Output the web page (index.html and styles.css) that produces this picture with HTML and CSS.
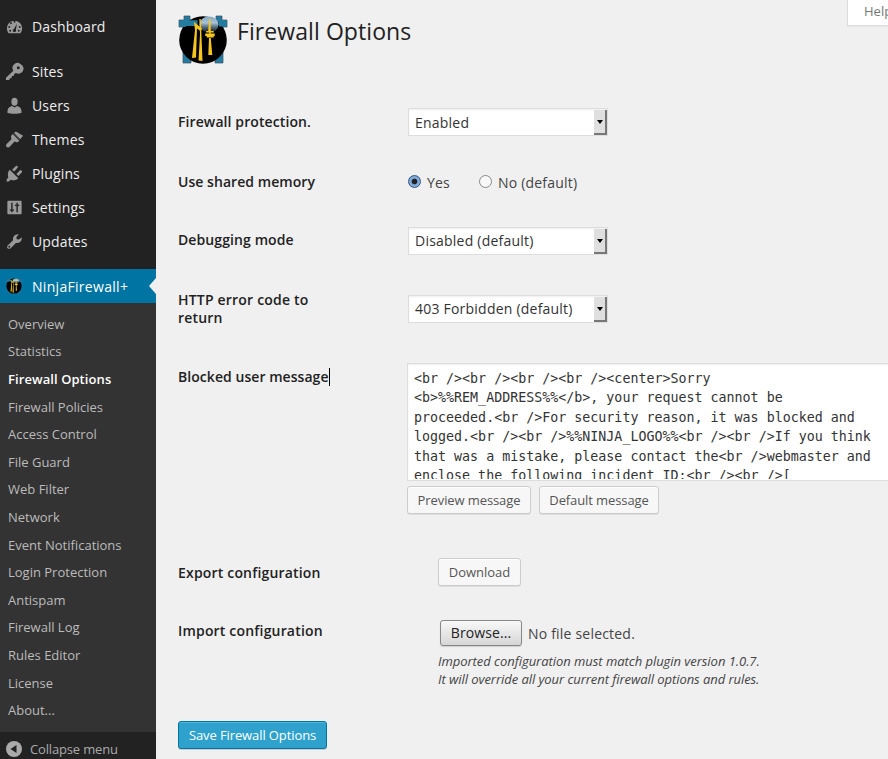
FILE: index.html
```
<!DOCTYPE html>
<html lang="en">
<head>
<meta charset="utf-8">
<title>Firewall Options</title>
<link rel="stylesheet" href="styles.css">
</head>
<body>
<svg class="defs" width="0" height="0">
  <defs>
    <linearGradient id="shine" x1="0" y1="0" x2="0" y2="1">
      <stop offset="0" stop-color="#7fa8c4"/><stop offset=".4" stop-color="#a9c3d8"/><stop offset="1" stop-color="#4f7797" stop-opacity=".25"/>
    </linearGradient>
    <symbol id="ninja" viewBox="0 0 50 50">
      <path fill="#247ba0" stroke="#3b5260" stroke-width=".7" d="M6 1h6v4h26V1h6v4h5v7h-4v36h-8V12H13v36H5V12H1V5h5z"/>
      <circle cx="25" cy="25" r="23.8" fill="#000"/>
      <path fill="#247ba0" d="M1.500 5.300h18v5.700H9l-2 1H1.500zM40 5.300h8.500v6.200H41z"/>
      <ellipse cx="31" cy="9.500" rx="9.500" ry="8" fill="url(#shine)"/>
      <path fill="#f5c51f" d="M16 7l8 6.500-1 3-4-3-1 29-4 .5 3-28zM21.300 4h1.500l1.700 42-4-.5 1.500-26zM31.200 4h1.500v12h3v1.500h-3v1h4v2.500h-1v1.500h-7V21h-1.500v-2.500h4v-1h-3V16h2zM31 23h1.800l1.500 17h-4z"/>
    </symbol>
  </defs>
</svg>
<div class="app">
  <nav class="sidebar">
    <ul class="menu">
      <li class="item first"><svg class="icon" viewBox="0 0 20 20"><path fill-rule="evenodd" d="M3.800 17A8 8 0 1 1 16.200 17zM10 4a1 1 0 1 0 0 2 1 1 0 0 0 0-2zM6.300 5.500a1 1 0 1 0 0 2 1 1 0 0 0 0-2zM4.500 9.500a1 1 0 1 0 0 2 1 1 0 0 0 0-2zM15.500 9.500a1 1 0 1 0 0 2 1 1 0 0 0 0-2zM12.500 7l-3 5.500a1.700 1.700 0 1 0 2 1zM5.500 13.500a1 1 0 1 0 0 2 1 1 0 0 0 0-2zM14.500 13.500a1 1 0 1 0 0 2 1 1 0 0 0 0-2z"/></svg><span>Dashboard</span></li>
      <li class="item"><svg class="icon" viewBox="0 0 20 20"><path fill-rule="evenodd" d="M17 2.500a5.300 5.300 0 0 0-8.200 6.600L1 16.500V19h3.500l.5-2h1.800l.5-2.200h1.800l.5-1.800 1.700-1.500A5.300 5.300 0 0 0 17 2.500zM15.500 6.500a1.500 1.500 0 1 1-2.900-.8 1.500 1.500 0 0 1 2.900.8z"/></svg><span>Sites</span></li>
      <li class="item"><svg class="icon" viewBox="0 0 20 20"><ellipse cx="10" cy="6" rx="3.300" ry="4.200"/><path d="M2.500 17.500c0-4 1.500-6.500 5-7l2.500 1.500 2.500-1.500c3.500.5 5 3 5 7-4 1.500-11 1.500-15 0z"/></svg><span>Users</span></li>
      <li class="item"><svg class="icon" viewBox="0 0 20 20"><path d="M11.500 1.500l7.500 4.500-3.500 4.200-6.500-6.700zM8.200 4.300l6.800 7-1.500 1.500c-1.500 0-2.500-.3-3.500-.8L5 17.500c-2 2-5 0-3.500-2.500L7 9.500c-.8-1.200-.8-2.500-.5-3.500z"/><path d="M9.200 3.200l7 7.200" stroke="#222" stroke-width=".9"/></svg><span>Themes</span></li>
      <li class="item"><svg class="icon" viewBox="0 0 20 20"><path d="M5 6l9 9c-2.500 2.500-5.500 2.700-8 1.500L4 18.500l-2.500-.2.300-2L3.500 14C2.500 11 3 8 5 6zM7.500 6l4-4c1.500-.5 2.500 1 1.800 2L9.700 8zM12 10.500l3.800-3.800c1.500-.8 2.800.6 2 2l-3.700 4z"/></svg><span>Plugins</span></li>
      <li class="item"><svg class="icon" viewBox="0 0 20 20"><path fill-rule="evenodd" d="M3.500 3h13a1 1 0 0 1 1 1v12a1 1 0 0 1-1 1h-13a1 1 0 0 1-1-1V4a1 1 0 0 1 1-1zM6.500 5v7H5v1.500h1.500V15H8v-1.500h1.500V12H8V5zM12 5v2h-1.500v1.500H12V15h1.500V8.500H15V7h-1.500V5z"/></svg><span>Settings</span></li>
      <li class="item"><svg class="icon" viewBox="0 0 20 20"><path fill-rule="evenodd" d="M17.500 5.500a5 5 0 0 1-6 6L6 17c-2.300 2-5-.3-3.200-2.800L8.500 8.800a5 5 0 0 1 6-6.300L12 5.300l.3 2.400 2.400.3zM4.500 14.500a1 1 0 1 0 0 2 1 1 0 0 0 0-2z"/></svg><span>Updates</span></li>
      <li class="item current"><svg class="mini"><use href="#ninja"/></svg><span>NinjaFirewall+</span></li>
    </ul>
    <ul class="submenu">
      <li>Overview</li><li>Statistics</li><li class="on">Firewall Options</li><li>Firewall Policies</li><li>Access Control</li><li>File Guard</li><li>Web Filter</li><li>Network</li><li>Event Notifications</li><li>Login Protection</li><li>Antispam</li><li>Firewall Log</li><li>Rules Editor</li><li>License</li><li>About...</li>
    </ul>
    <div class="collapse"><svg class="cicon" viewBox="0 0 16 16"><circle cx="8" cy="8" r="8" fill="#aaa"/><path d="M10.500 4v8L4.500 8z" fill="#222"/></svg><span>Collapse menu</span></div>
  </nav>
  <main class="content">
    <div class="help">Help</div>
    <header class="head"><svg class="logo"><use href="#ninja"/></svg><h1>Firewall Options</h1></header>
    <form class="form">
      <div class="row r1"><b>Firewall protection.</b><div class="select"><span>Enabled</span><i></i></div></div>
      <div class="row r2"><b>Use shared memory</b><div class="radios"><span class="radio checked"></span><span class="yes">Yes</span><span class="radio"></span><span>No (default)</span></div></div>
      <div class="row r3"><b>Debugging mode</b><div class="select"><span>Disabled (default)</span><i></i></div></div>
      <div class="row r4"><b>HTTP error code to return</b><div class="select"><span>403 Forbidden (default)</span><i></i></div></div>
      <div class="row r5"><b><span class="caret">Blocked user message</span></b><div>
        <div class="area"><div class="text">&lt;br /&gt;&lt;br /&gt;&lt;br /&gt;&lt;br /&gt;&lt;center&gt;Sorry
&lt;b&gt;%%REM_ADDRESS%%&lt;/b&gt;, your request cannot be
proceeded.&lt;br /&gt;For security reason, it was blocked and
logged.&lt;br /&gt;&lt;br /&gt;%%NINJA_LOGO%%&lt;br /&gt;&lt;br /&gt;If you think
that was a mistake, please contact the&lt;br /&gt;webmaster and
enclose the following incident ID:&lt;br /&gt;&lt;br /&gt;[</div></div>
        <div class="buttons"><span class="btn preview">Preview message</span><span class="btn default">Default message</span></div></div></div>
      <div class="row r6"><b>Export configuration</b><span class="btn download">Download</span></div>
      <div class="row r7"><b>Import configuration</b><div class="import"><div class="file"><span class="browse">Browse...</span><span class="none">No file selected.</span></div><p>Imported configuration must match plugin version 1.0.7.<br>It will override all your current firewall options and rules.</p></div></div>
    </form>
    <span class="btn save">Save Firewall Options</span>
  </main>
</div>
</body>
</html>
```
FILE: styles.css
```
* { box-sizing: border-box; }
body { margin: 0; background: #f0f0f0; font: 14px/18px "Open Sans", "Noto Sans", sans-serif; color: #444; overflow: hidden; }
ul { list-style: none; margin: 0; padding: 0; }
.defs { position: absolute; }
.app { display: flex; width: 888px; height: 759px; overflow: hidden; }
.sidebar { flex: 0 0 156px; background: #222; overflow: hidden; }
.menu { padding-top: 10px; color: #eee; letter-spacing: .14px; }
.item { display: flex; align-items: center; height: 34px; }
.item.first { margin-bottom: 11px; }
.icon { width: 19px; height: 19px; margin: -2px 8px 0 5px; fill: #999; }
.mini { width: 16px; height: 16px; margin: 0 10px 0 6px; }
.current { position: relative; margin-top: 10px; background: #0074a2; color: #fff; letter-spacing: .3px; }
.current span { padding-top: 1px; }
.current::after { content: ""; position: absolute; right: 0; top: 9px; border: 8px solid transparent; border-left: 0; border-right: 7px solid #f0f0f0; }
.submenu { background: #333; height: 429px; padding: 6.900px 8px 0; font-size: 13px; color: #bbb; }
.submenu li { height: 27.6px; line-height: 28px; white-space: nowrap; }
.submenu .on { color: #fff; font-weight: 600; letter-spacing: .08px; }
.collapse { display: flex; height: 34px; padding-left: 6px; gap: 8px; align-items: center; font-size: 13px; letter-spacing: -.16px; color: #aaa; }
.cicon { width: 16px; height: 16px; }
.content { flex: 1; min-width: 0; padding: 14px 0 0 22px; position: relative; overflow: hidden; }
.help { position: absolute; left: 691px; top: -1px; width: 70px; height: 27px; border: 1px solid #ddd; background: #fff; padding: 3px 16px; font-size: 13px; line-height: 17px; color: #777; box-shadow: 0 1px 1px rgba(0,0,0,.04); }
.head { display: flex; height: 84px; gap: 9px; }
.logo { width: 50px; height: 50px; margin-top: 1px; }
h1 { margin: 1px 0 0; font: 400 23px/32px "Open Sans", sans-serif; letter-spacing: .08px; color: #222; }
.row { display: grid; grid-template-columns: 230px 1fr; align-items: start; }
.row b { font-weight: 600; color: #222; padding-top: 15px; width: 160px; letter-spacing: .1px; }
.r1 { height: 60px; }
.r2 { height: 58px; }
.r3 { height: 60px; }
.r4 { height: 77px; }
.r5 { height: 196px; grid-template-columns: 229px 1fr; }
.r6 { height: 58px; grid-template-columns: 260px 1fr; }
.r7 { height: 114px; grid-template-columns: 260px 1fr; }
.row.r2 b, .row.r5 b { letter-spacing: .05px; }
.r4 b { letter-spacing: .2px; }
.r6 b, .r7 b { letter-spacing: .18px; }
.select { display: flex; width: 200px; height: 28px; margin-top: 10px; border: 1px solid #ddd; background: #fff; box-shadow: inset 0 1px 2px rgba(0,0,0,.07); padding-left: 6px; line-height: 27px; color: #333; letter-spacing: .22px; justify-content: space-between; }
.select i { display: flex; align-items: center; justify-content: center; width: 13px; margin: 1px 0 0; background: #dfdfdf; border-right: 2px solid #777; border-bottom: 2px solid #777; }
.select i::after { content: ""; border: 3.500px solid transparent; border-top: 4px solid #000; border-bottom: 0; }
.r3 .select { margin-top: 11px; line-height: 25px; }
.r4 .select { margin-top: 19px; line-height: 25px; }
.radios { display: flex; align-items: center; margin-top: 16px; letter-spacing: .2px; }
.radio { width: 13px; height: 13px; border: 1px solid #888; border-radius: 50%; background: #f8f8f8; margin: -3px 6px 0 0; }
.radio.checked { border-color: #33557f; background: radial-gradient(circle, #222 0 2.300px, #78a8dc 3.300px, #86aeda 5px, #5b8bc0 6px); }
.yes { margin-right: 29px; }
.caret { display: inline-block; white-space: nowrap; box-shadow: 1px 0 #000; }
.area { height: 118px; margin-top: 10px; width: 520px; border: 1px solid #ddd; background: #fff; box-shadow: inset 0 1px 2px rgba(0,0,0,.07); padding: 5px 6px 1px; overflow: hidden; }
.text { height: 110px; overflow: hidden; font: 13.320px/19.400px "DejaVu Sans Mono", monospace; color: #333; white-space: pre; }
.buttons { display: flex; gap: 8px; margin-top: 5px; }
.btn { display: block; height: 28px; border: 1px solid #ccc; border-radius: 3px; background: #f7f7f7; box-shadow: inset 0 1px 0 #fff, 0 1px 0 rgba(0,0,0,.08); font-size: 13px; line-height: 26px; text-align: center; color: #555; white-space: nowrap; letter-spacing: -.1px; }
.preview { width: 124px; }
.default { width: 120px; }
.download { width: 83px; margin-top: 9px; letter-spacing: 0; }
.import { padding-top: 12px; }
.file { display: flex; align-items: center; gap: 6px; height: 28px; padding-left: 2px; letter-spacing: .2px; }
.none { padding-top: 2px; }
.browse { width: 82px; height: 26px; border: 1px solid #888; border-radius: 3px; background: linear-gradient(#f8f8f8, #d6d6d6); line-height: 24px; text-align: center; color: #222; box-shadow: 0 1px 1px rgba(0,0,0,.15); letter-spacing: .1px; }
.import p { margin: 5px 0 0; font-size: 13px; line-height: 18px; font-style: italic; letter-spacing: -.06px; }
.import p::first-line { letter-spacing: -.04px; }
.save { width: 149px; background: #2ea2cc; border-color: #0074a2; color: #fff; box-shadow: inset 0 1px 0 rgba(120,200,230,.5), 0 1px 0 rgba(0,0,0,.15); }
```
